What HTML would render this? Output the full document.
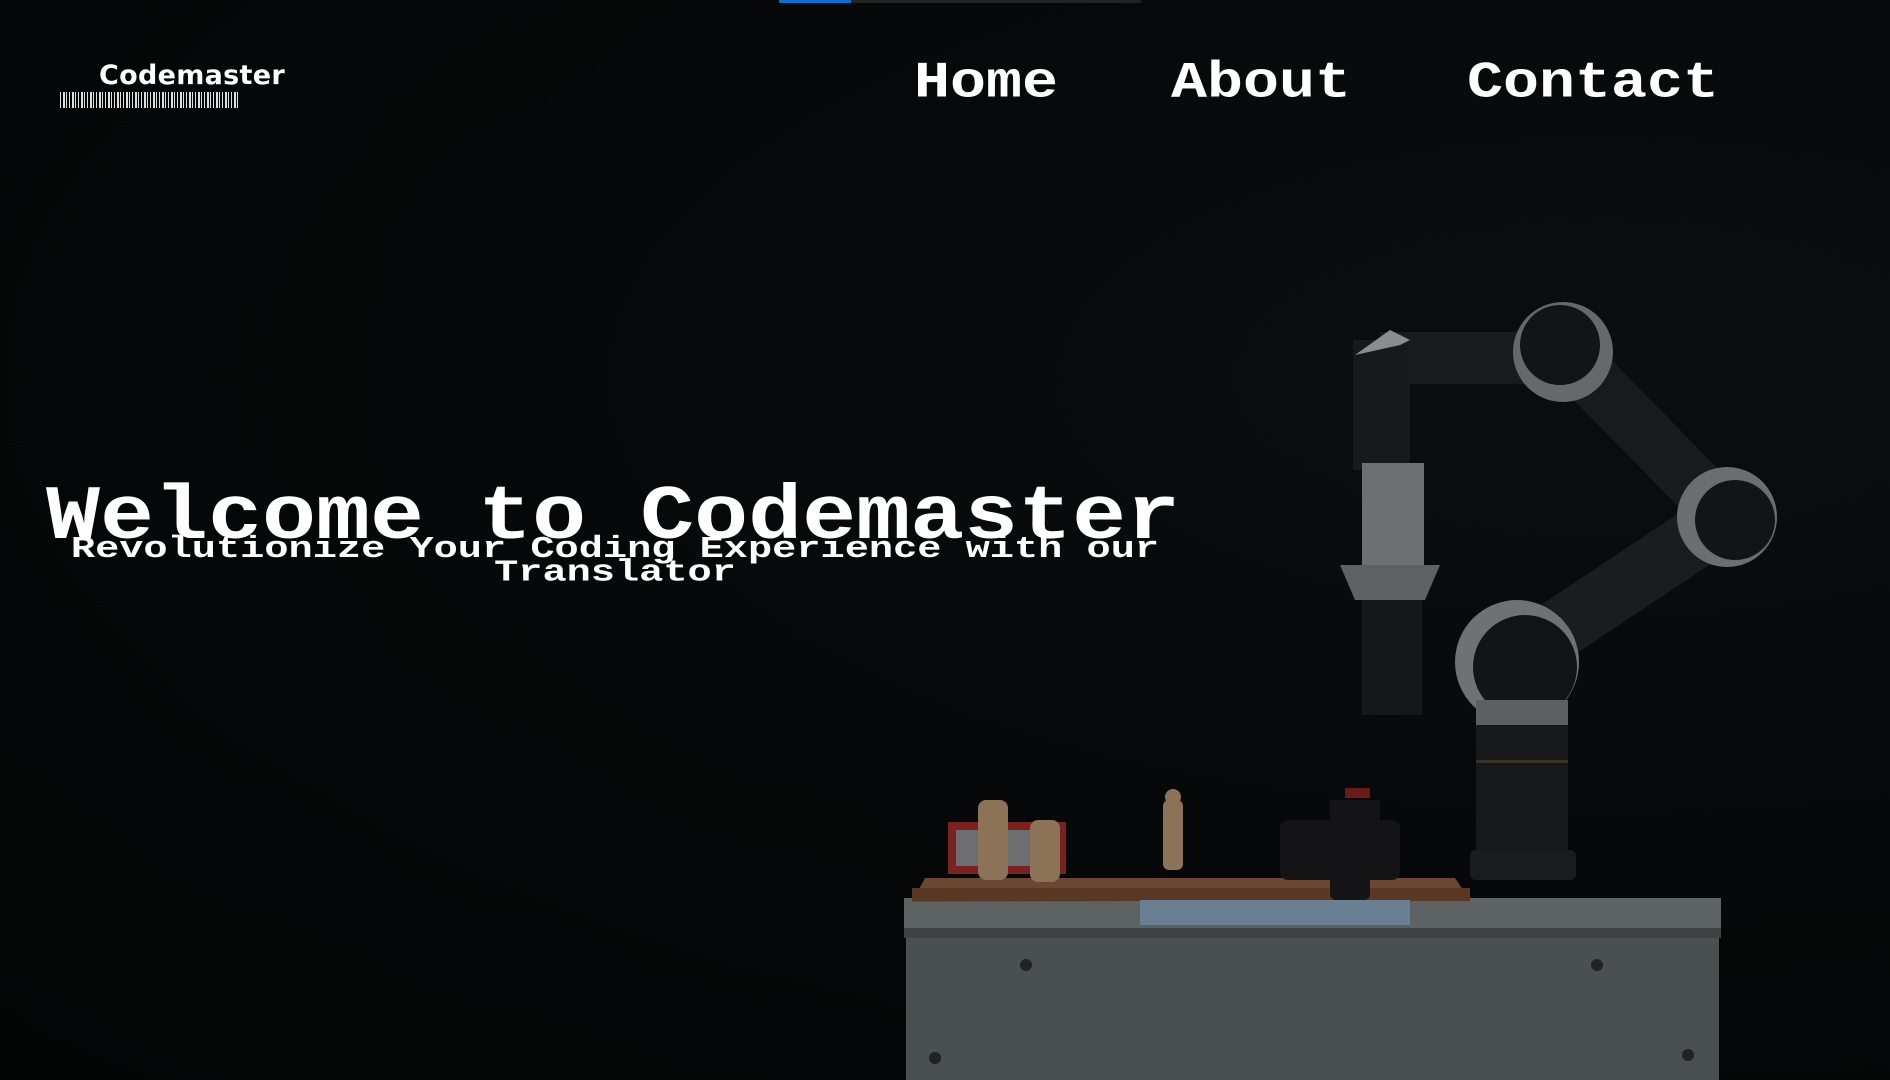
<!DOCTYPE html>
<html><head><meta charset="utf-8"><style>
*{margin:0;padding:0;box-sizing:border-box}
html,body{width:1890px;height:1080px;overflow:hidden;background:#040607}
body{position:relative;font-family:"Liberation Mono",monospace;color:#fff}
.bg{position:absolute;inset:0;background:radial-gradient(ellipse at 85% 35%,#0b0d0f 0%,#060809 50%,#030505 100%)}
.bar1{position:absolute;left:779px;top:0;width:72px;height:3px;background:#0a6fd0}
.bar2{position:absolute;left:851px;top:0;width:290px;height:3px;background:#222}
.logo{position:absolute;left:99px;top:60px;font-family:"DejaVu Sans","Liberation Sans",sans-serif;font-weight:bold;font-size:27px;letter-spacing:.3px}
.barcode{position:absolute;left:60px;top:92px;width:180px;height:16px;background:repeating-linear-gradient(90deg,#ddd 0 1px,transparent 1px 3px,#ddd 3px 5px,transparent 5px 6px,#ddd 6px 7px,transparent 7px 9px)}
.nav{position:absolute;top:58px;font-weight:bold;font-size:60px;line-height:60px;transform:scaleY(.85);transform-origin:0 0}
h1{position:absolute;left:46px;top:484px;font-size:90px;line-height:80px;font-weight:bold;white-space:nowrap;transform:scaleY(.86);transform-origin:0 0}
.sub{position:absolute;left:40px;top:538px;width:1150px;text-align:center;font-size:40.3px;line-height:31px;font-weight:bold;transform:scaleY(.76);transform-origin:0 0}
</style></head><body>
<div class="bg"></div>
<svg style="position:absolute;left:0;top:0" width="1890" height="1080">
<rect x="904" y="898" width="817" height="40" fill="#5d6263"/>
<rect x="904" y="928" width="817" height="10" fill="#3e4243"/>
<rect x="906" y="938" width="813" height="142" fill="#4a4f50"/>
<circle cx="1026" cy="965" r="6" fill="#222"/><circle cx="1597" cy="965" r="6" fill="#222"/>
<circle cx="935" cy="1058" r="6" fill="#222"/><circle cx="1688" cy="1055" r="6" fill="#222"/>
<polygon points="925,878 1455,878 1470,900 912,902" fill="#6b4632"/>
<rect x="912" y="888" width="558" height="13" fill="#5a3826"/>
<rect x="1140" y="900" width="270" height="25" fill="#6b7f93"/>
<rect x="948" y="822" width="118" height="52" fill="#7a2220"/><rect x="956" y="830" width="100" height="36" fill="#6c6e70"/>
<g fill="#8c7358"><rect x="978" y="800" width="30" height="80" rx="8"/><rect x="1030" y="820" width="30" height="62" rx="8"/><rect x="1163" y="800" width="20" height="70" rx="6"/><circle cx="1173" cy="797" r="8"/></g>
<g fill="#141416"><rect x="1280" y="820" width="120" height="60" rx="8"/><rect x="1330" y="800" width="50" height="30"/><rect x="1330" y="855" width="40" height="45" rx="6"/></g>
<rect x="1345" y="788" width="25" height="10" fill="#6a1a18"/>
<rect x="1476" y="710" width="92" height="170" fill="#17191b"/>
<rect x="1470" y="850" width="106" height="30" rx="6" fill="#1a1c1e"/>
<rect x="1476" y="760" width="92" height="3" fill="#3a3025"/>
<line x1="1517" y1="657" x2="1727" y2="517" stroke="#1a1c1f" stroke-width="60"/>
<line x1="1727" y1="517" x2="1563" y2="350" stroke="#181a1d" stroke-width="55"/>
<line x1="1380" y1="358" x2="1563" y2="358" stroke="#191b1e" stroke-width="52"/>
<rect x="1353" y="340" width="57" height="130" fill="#17191b"/>
<polygon points="1355,355 1400,345 1410,340 1390,330" fill="#8a8d8f"/>
<circle cx="1517" cy="662" r="62" fill="#6e7274"/><circle cx="1525" cy="667" r="52" fill="#121416"/>
<rect x="1476" y="700" width="92" height="25" fill="#5c6062"/>
<circle cx="1727" cy="517" r="50" fill="#6a6e70"/><circle cx="1735" cy="520" r="40" fill="#121416"/>
<circle cx="1563" cy="352" r="50" fill="#66696b"/><circle cx="1560" cy="345" r="40" fill="#121416"/>
<rect x="1362" y="463" width="62" height="120" fill="#6c7072"/>
<polygon points="1340,565 1440,565 1425,600 1355,600" fill="#5d6163"/>
<rect x="1362" y="600" width="60" height="115" fill="#15171a"/>
</svg>
<div class="bar1"></div><div class="bar2"></div>
<div class="logo">Codemaster</div>
<div class="barcode"></div>
<div class="nav" style="left:914px">Home</div>
<div class="nav" style="left:1171px">About</div>
<div class="nav" style="left:1467px">Contact</div>
<h1>Welcome to Codemaster</h1>
<div class="sub">Revolutionize Your Coding Experience with our<br>Translator</div>
</body></html>
